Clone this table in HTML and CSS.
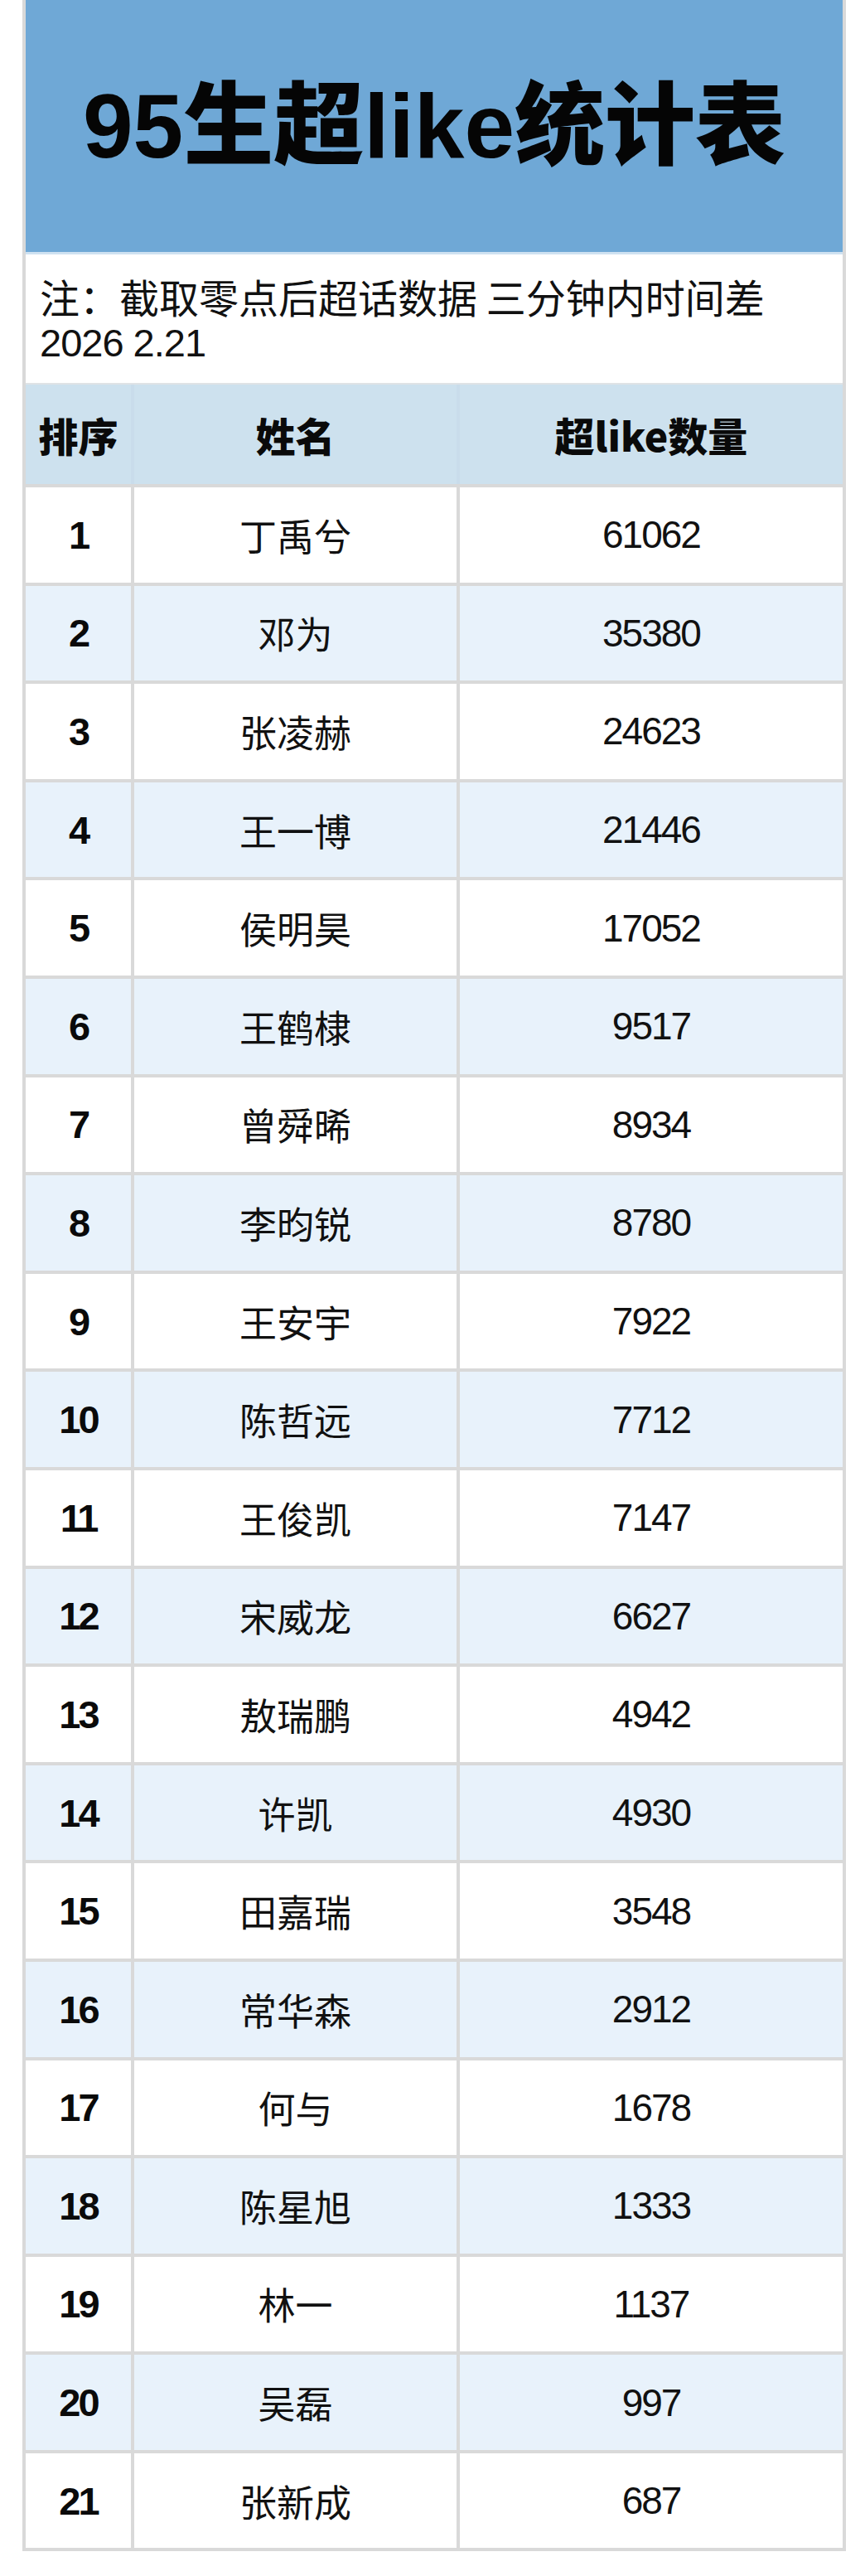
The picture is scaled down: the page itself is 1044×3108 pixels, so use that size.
FILE: index.html
```html
<!DOCTYPE html>
<html lang="zh-CN">
<head>
<meta charset="utf-8">
<title>95生超like统计表</title>
<link rel="stylesheet" href="styles.css">
</head>
<body>
<div class="sheet">
  <div class="title"><h1>95生超like统计表</h1></div>
  <div class="note">
    <p class="line-cn">注：截取零点后超话数据 三分钟内时间差</p>
    <p class="line-date">2026 2.21</p>
  </div>
  <div class="head">
    <div class="hcell">排序</div>
    <div class="hcell">姓名</div>
    <div class="hcell">超like数量</div>
  </div>
  <div class="body">
    <div class="rank">1</div><div class="name">丁禹兮</div><div class="num">61062</div>
    <div class="rank alt">2</div><div class="name alt">邓为</div><div class="num alt">35380</div>
    <div class="rank">3</div><div class="name">张凌赫</div><div class="num">24623</div>
    <div class="rank alt">4</div><div class="name alt">王一博</div><div class="num alt">21446</div>
    <div class="rank">5</div><div class="name">侯明昊</div><div class="num">17052</div>
    <div class="rank alt">6</div><div class="name alt">王鹤棣</div><div class="num alt">9517</div>
    <div class="rank">7</div><div class="name">曾舜晞</div><div class="num">8934</div>
    <div class="rank alt">8</div><div class="name alt">李昀锐</div><div class="num alt">8780</div>
    <div class="rank">9</div><div class="name">王安宇</div><div class="num">7922</div>
    <div class="rank alt">10</div><div class="name alt">陈哲远</div><div class="num alt">7712</div>
    <div class="rank">11</div><div class="name">王俊凯</div><div class="num">7147</div>
    <div class="rank alt">12</div><div class="name alt">宋威龙</div><div class="num alt">6627</div>
    <div class="rank">13</div><div class="name">敖瑞鹏</div><div class="num">4942</div>
    <div class="rank alt">14</div><div class="name alt">许凯</div><div class="num alt">4930</div>
    <div class="rank">15</div><div class="name">田嘉瑞</div><div class="num">3548</div>
    <div class="rank alt">16</div><div class="name alt">常华森</div><div class="num alt">2912</div>
    <div class="rank">17</div><div class="name">何与</div><div class="num">1678</div>
    <div class="rank alt">18</div><div class="name alt">陈星旭</div><div class="num alt">1333</div>
    <div class="rank">19</div><div class="name">林一</div><div class="num">1137</div>
    <div class="rank alt">20</div><div class="name alt">吴磊</div><div class="num alt">997</div>
    <div class="rank">21</div><div class="name">张新成</div><div class="num">687</div>
  </div>
</div>
</body>
</html>
```

FILE: styles.css
```css
html, body {
  margin: 0;
  padding: 0;
  background: #ffffff;
}

body {
  font-family: "Liberation Sans", "Noto Sans CJK SC", sans-serif;
  color: #111111;
}

.sheet {
  margin-left: 27px;
  width: 994px;
  box-sizing: border-box;
  border-left: 4px solid #d9d9d9;
  border-right: 4px solid #d9d9d9;
  border-bottom: 4px solid #d9d9d9;
  background: #d9d9d9;
}

.title {
  height: 304px;
  background: #6fa8d6;
  border-bottom: 3px solid #cfe2f1;
  display: flex;
  align-items: center;
  justify-content: center;
}

.title h1 {
  margin: 0;
  font-family: "Liberation Sans", "Noto Sans CJK SC", sans-serif;
  font-weight: 900;
  font-size: 109px;
  line-height: 1;
  color: #050505;
}

.note {
  height: 155px;
  box-sizing: border-box;
  background: #ffffff;
  padding: 19px 0 0 17px;
  color: #111111;
}

.note p {
  margin: 0;
  white-space: nowrap;
}

.line-cn {
  font-family: "Noto Sans CJK SC", sans-serif;
  font-size: 48px;
  line-height: 62px;
}

.line-date {
  font-family: "Liberation Sans", sans-serif;
  font-size: 47px;
  line-height: 52px;
  letter-spacing: -1px;
}

.head {
  height: 122px;
  display: grid;
  grid-template-columns: 127px 389px 462px;
  column-gap: 4px;
  background: #c9dceb;
  border-top: 2px solid #dfe3e6;
  box-sizing: border-box;
}

.hcell {
  background: #cde1ee;
  display: flex;
  align-items: center;
  justify-content: center;
  font-family: "Noto Sans CJK SC", sans-serif;
  font-weight: 900;
  font-size: 48px;
  color: #0a0a0a;
}

.body {
  display: grid;
  grid-template-columns: 127px 389px 462px;
  grid-auto-rows: 114.6px;
  gap: 4px;
  padding-top: 4px;
  background: #d9d9d9;
}

.body > div {
  background: #ffffff;
  display: flex;
  align-items: center;
  justify-content: center;
}

.body > div.alt {
  background: #e8f2fb;
}

.rank {
  font-family: "Liberation Sans", sans-serif;
  font-weight: 700;
  font-size: 47px;
  letter-spacing: -3px;
  color: #0a0a0a;
}

.name {
  font-family: "Noto Sans CJK SC", sans-serif;
  font-size: 45px;
  color: #111111;
}

.num {
  font-family: "Liberation Sans", sans-serif;
  font-size: 46px;
  letter-spacing: -2px;
  color: #111111;
}
```
